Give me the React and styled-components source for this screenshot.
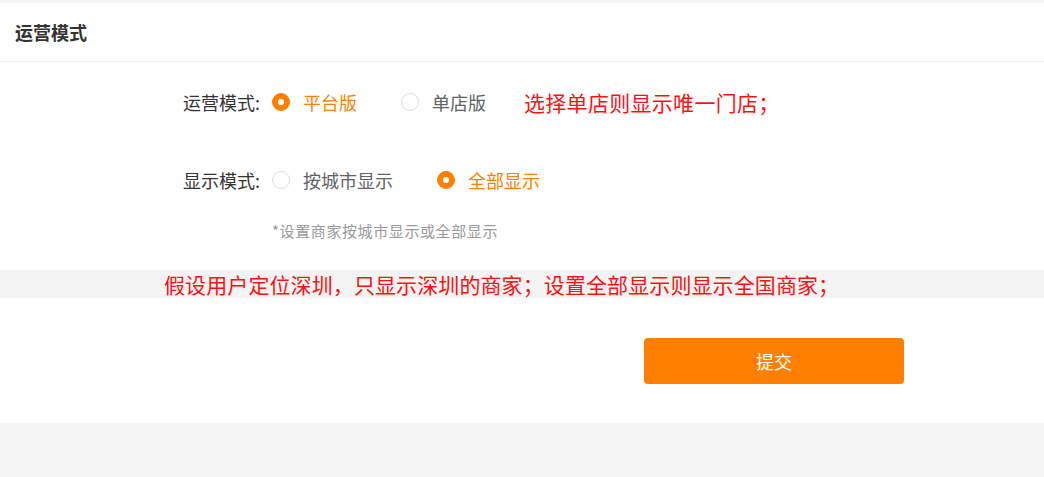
import React from "react";
import styled, { createGlobalStyle } from "styled-components";

const Global = createGlobalStyle`
  html, body { margin: 0; padding: 0; background: #f5f5f5; }
  body { font-family: "Noto Sans CJK SC", "Noto Sans", sans-serif; }
  * { box-sizing: border-box; }
`;

const Page = styled.div`
  width: 1044px;
  height: 477px;
  background: #f5f5f5;
  padding-top: 3px;
  overflow: hidden;
`;

const Card = styled.div`
  background: #fff;
  height: 420px;
  display: flex;
  flex-direction: column;
`;

const Header = styled.div`
  height: 59px;
  border-bottom: 1px solid #eeeeee;
  display: flex;
  align-items: center;
  padding-left: 15px;
  font-size: 18px;
  font-weight: 700;
  color: #333;
`;

const Form = styled.div`
  padding-top: 20px;
  display: flex;
  flex-direction: column;
`;

const Row = styled.div`
  display: flex;
  align-items: center;
  height: 40px;
  margin-top: ${(p) => p.$mt || 0}px;
`;

const Label = styled.div`
  width: 272px;
  padding-right: 12px;
  text-align: right;
  font-size: 18px;
  color: #333;
  white-space: nowrap;
`;

const Option = styled.label`
  display: flex;
  align-items: center;
  gap: 13px;
  margin-right: 44px;
  font-size: 18px;
  color: ${(p) => (p.$checked ? "#ff8000" : "#606266")};
  cursor: pointer;
  white-space: nowrap;
`;

const Dot = styled.span`
  width: 18px;
  height: 18px;
  border-radius: 50%;
  flex: none;
  display: flex;
  align-items: center;
  justify-content: center;
  background: ${(p) => (p.$checked ? "#ff8000" : "#fff")};
  border: 1px solid ${(p) => (p.$checked ? "#ff8000" : "#dcdfe6")};
  &::after {
    content: "";
    width: 6px;
    height: 6px;
    border-radius: 50%;
    background: #fff;
    display: ${(p) => (p.$checked ? "block" : "none")};
  }
`;

const Note = styled.span`
  color: #ff1010;
  font-size: 21px;
  letter-spacing: 0.3px;
  margin-left: -6px;
  white-space: nowrap;
`;

const Hint = styled.div`
  margin-top: 21px;
  padding-left: 272px;
  font-size: 15px;
  letter-spacing: 0.6px;
  line-height: 20px;
  color: #999;
`;

const Band = styled.div`
  margin-top: 29px;
  height: 28px;
  background: #f4f4f4;
  display: flex;
  align-items: center;
  padding-left: 164px;
  color: #ff1010;
  font-size: 21px;
  letter-spacing: 0.1px;
  white-space: nowrap;
`;

const Actions = styled.div`
  padding-top: 40px;
  padding-left: 644px;
`;

const Submit = styled.button`
  width: 260px;
  height: 46px;
  border: none;
  border-radius: 4px;
  background: #ff8000;
  color: #fff;
  font-family: inherit;
  font-size: 18px;
  cursor: pointer;
`;

function Radio({ checked, children }) {
  return (
    <Option $checked={checked}>
      <Dot $checked={checked} />
      {children}
    </Option>
  );
}

export default function App() {
  return (
    <Page>
      <Global />
      <Card>
        <Header>运营模式</Header>
        <Form>
          <Row>
            <Label>运营模式:</Label>
            <Radio checked>平台版</Radio>
            <Radio>单店版</Radio>
            <Note>选择单店则显示唯一门店；</Note>
          </Row>
          <Row $mt={38}>
            <Label>显示模式:</Label>
            <Radio>按城市显示</Radio>
            <Radio checked>全部显示</Radio>
          </Row>
          <Hint>*设置商家按城市显示或全部显示</Hint>
        </Form>
        <Band>假设用户定位深圳，只显示深圳的商家；设置全部显示则显示全国商家；</Band>
        <Actions>
          <Submit>提交</Submit>
        </Actions>
      </Card>
    </Page>
  );
}
